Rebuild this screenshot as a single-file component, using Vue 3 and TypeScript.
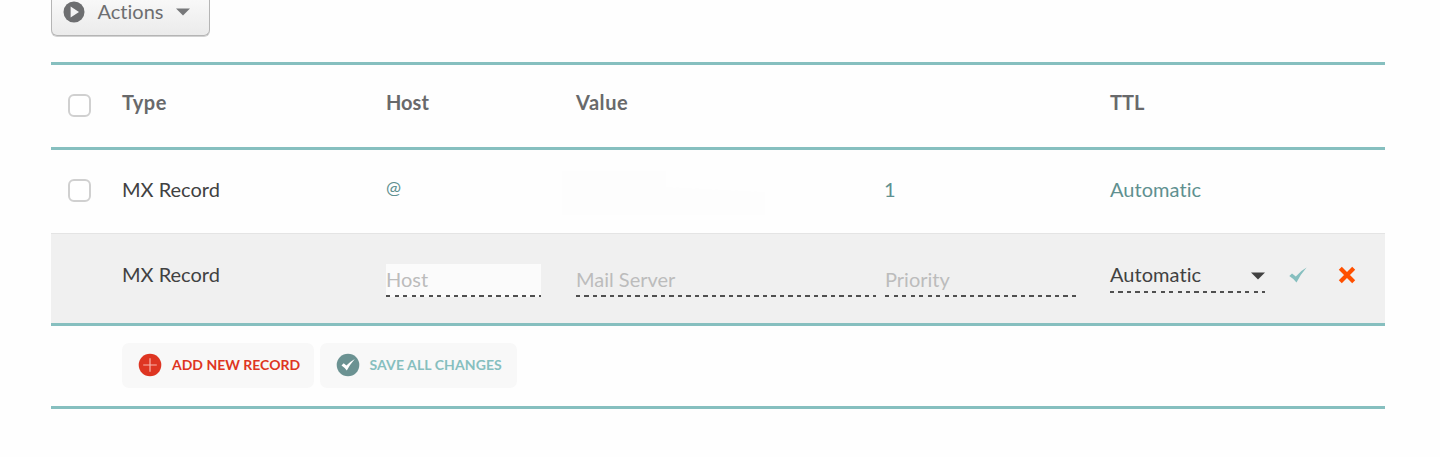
<script setup lang="ts">
import { ref } from 'vue'

const host = ref('')
const server = ref('')
const priority = ref('')
</script>

<template>
  <main class="panel">
    <div class="toolbar">
      <button class="actions" type="button">
        <svg class="play" viewBox="0 0 22 22">
          <circle cx="11" cy="11" r="10.5" fill="#6d6e70" />
          <path d="M7.6 5.6v10.8l8.4-5.4z" fill="#f4f4f4" />
        </svg>
        <span class="actions-label">Actions</span>
        <svg class="caret" viewBox="0 0 14 8"><path d="M0 .5h14L7 7.5z" fill="#77787a" /></svg>
      </button>
    </div>

    <section class="records">
      <div class="row head">
        <div class="cell pick"><span class="box"></span></div>
        <div class="cell"><span class="t-type">Type</span></div>
        <div class="cell"><span>Host</span></div>
        <div class="cell"><span class="t-value">Value</span></div>
        <div class="cell"></div>
        <div class="cell"><span>TTL</span></div>
      </div>

      <div class="row record">
        <div class="cell pick"><span class="box"></span></div>
        <div class="cell"><span>MX Record</span></div>
        <div class="cell teal"><span class="at">@</span></div>
        <div class="cell">
          <svg class="mask" viewBox="0 0 203 44"><path d="M0 0h104v16l99 5v23H0z" fill="#fdfdfd" /></svg>
        </div>
        <div class="cell teal"><span class="one">1</span></div>
        <div class="cell teal"><span class="auto">Automatic</span></div>
      </div>

      <div class="row edit">
        <div class="cell"></div>
        <div class="cell"><span>MX Record</span></div>
        <div class="cell"><input v-model="host" class="field field-host" placeholder="Host" /></div>
        <div class="cell"><input v-model="server" class="field field-server" placeholder="Mail Server" /></div>
        <div class="cell"><input v-model="priority" class="field field-priority" placeholder="Priority" /></div>
        <div class="cell controls">
          <div class="select">
            <span class="auto">Automatic</span>
            <svg class="select-caret" viewBox="0 0 14 8"><path d="M0 .5h14L7 7.5z" fill="#414141" /></svg>
          </div>
          <svg class="confirm" viewBox="0 0 18 16">
            <path d="M.3 9 3 6.5 6.8 9.4Q11.2 4 17.6.5q-6 6.7-10.1 15Q4.5 11.6.3 9z" fill="#86bfbf" />
          </svg>
          <svg class="cancel" viewBox="0 0 18 18">
            <path d="M2.3 2.3l13.4 13.4M15.7 2.3L2.3 15.7" stroke="#ff5000" stroke-width="4.2" fill="none" />
          </svg>
        </div>
      </div>

      <div class="footer">
        <button class="action add" type="button">
          <svg class="disc" viewBox="0 0 24 24">
            <circle cx="12" cy="12" r="11.3" fill="#de3522" />
            <path d="M12 5.2v13.6M5.2 12h13.6" stroke="#f9b5ac" stroke-width="1.2" />
          </svg>
          <span class="add-label">ADD NEW RECORD</span>
        </button>
        <button class="action save" type="button">
          <svg class="disc" viewBox="0 0 24 24">
            <circle cx="12" cy="12" r="11.3" fill="#6b9292" />
            <path d="M5.5 12.5 7.7 10.2 10.4 12.6Q13.8 8.8 18.8 6 14 11.5 10.8 17.5 8.6 14.5 5.5 12.5z" fill="#fff" />
          </svg>
          <span class="save-label">SAVE ALL CHANGES</span>
        </button>
      </div>
    </section>
  </main>
</template>

<style>
body {
  background: #fefefe;
  overflow: hidden;
}
</style>

<style scoped>
.panel {
  box-sizing: border-box;
  width: 1440px;
  height: 457px;
  padding: 0 55px 0 51px;
  overflow: hidden;
  background: #fefefe;
  color: #414141;
  font: 20px/24px Lato, "Open Sans", sans-serif;
  font-variant-ligatures: none;
}
svg {
  display: block;
  flex: none;
}
span {
  white-space: nowrap;
}
button {
  font: inherit;
  font-variant-ligatures: none;
  margin: 0;
}
.toolbar {
  height: 62px;
}
.actions {
  box-sizing: border-box;
  display: flex;
  align-items: flex-start;
  width: 159px;
  height: 36px;
  padding: 0 0 0 12px;
  border: 1px solid #b5b5b5;
  border-top: 0;
  border-radius: 0 0 6px 6px;
  background: linear-gradient(#f8f8f8, #ebebeb);
  box-shadow: 0 1px 0 #d2d2d2;
  color: #6d6e70;
}
.play {
  width: 22px;
  height: 22px;
  margin: 1px 0 0 -1px;
}
.actions-label {
  width: 67px;
  margin: -1px 0 0 12px;
}
.caret {
  width: 14px;
  height: 8px;
  margin: 8px 0 0 12px;
}
.records {
  border-top: 3px solid #86bfbf;
}
.row {
  display: grid;
  grid-template-columns: 71px 264px 190px 309px 225px 1fr;
}
.head {
  box-sizing: border-box;
  height: 82px;
  padding-top: 25px;
  color: #68696b;
  font-weight: 700;
}
.t-type {
  letter-spacing: 0.5px;
}
.t-value {
  letter-spacing: 0.55px;
}
.record {
  box-sizing: border-box;
  height: 86px;
  padding-top: 27px;
  border-top: 3px solid #86bfbf;
}
.edit {
  box-sizing: border-box;
  height: 93px;
  padding-top: 28px;
  border-top: 1px solid #e4e4e4;
  border-bottom: 3px solid #86bfbf;
  background: #f0f0f0;
}
.pick {
  padding: 4px 0 0 17px;
}
.record .pick {
  padding-top: 2px;
}
.box {
  box-sizing: border-box;
  display: block;
  width: 23px;
  height: 23px;
  border: 2px solid #d0d0d0;
  border-radius: 6px;
  background: #fff;
}
.teal {
  color: #5f9090;
}
.at {
  display: block;
  margin-top: -2px;
  font-size: 18px;
}
.one {
  margin-left: -1px;
}
.mask {
  width: 203px;
  height: 44px;
  margin: -6px 0 0 -14px;
}
.auto {
  letter-spacing: 0.05px;
}
.field {
  box-sizing: border-box;
  display: block;
  height: 33px;
  margin-top: 2px;
  padding: 0 0 3px;
  border: 0;
  border-radius: 0;
  outline: 0;
  background: repeating-linear-gradient(90deg, #505050 0 4.2px, transparent 4.2px 8.5px) 0 100% / 100% 2px no-repeat;
  color: #414141;
  font: inherit;
}
.field::placeholder {
  color: #bcbcbc;
  opacity: 1;
}
.field-host {
  width: 155px;
  background-color: #fbfbfb;
}
.field-server {
  width: 300px;
}
.field-priority {
  width: 191px;
}
.controls {
  display: flex;
  align-items: flex-start;
}
.select {
  display: flex;
  justify-content: space-between;
  box-sizing: border-box;
  width: 155px;
  height: 31px;
  background: repeating-linear-gradient(90deg, #505050 0 4.2px, transparent 4.2px 8.45px) 0 100% / 100% 2px no-repeat;
}
.select-caret {
  width: 14px;
  height: 8px;
  margin-top: 10px;
}
.confirm {
  width: 18px;
  height: 16px;
  margin: 5px 0 0 24px;
}
.cancel {
  width: 18px;
  height: 18px;
  margin: 4px 0 0 30.5px;
}
.footer {
  display: flex;
  gap: 6px;
  box-sizing: border-box;
  height: 83px;
  padding: 17px 0 0 71px;
  border-bottom: 3px solid #86bfbf;
}
.action {
  box-sizing: border-box;
  display: flex;
  align-items: center;
  height: 45px;
  padding: 0 0 1px 16px;
  border: 0;
  border-radius: 7px;
  background: #f8f8f8;
  font-size: 14px;
  font-weight: 700;
}
.add {
  width: 192px;
  color: #de3522;
}
.save {
  width: 197px;
  padding-left: 15.5px;
  color: #86bfbf;
}
.disc {
  width: 24px;
  height: 24px;
}
.action span {
  margin: -1px 0 0 10px;
}
.save-label {
  letter-spacing: 0.1px;
}
</style>
